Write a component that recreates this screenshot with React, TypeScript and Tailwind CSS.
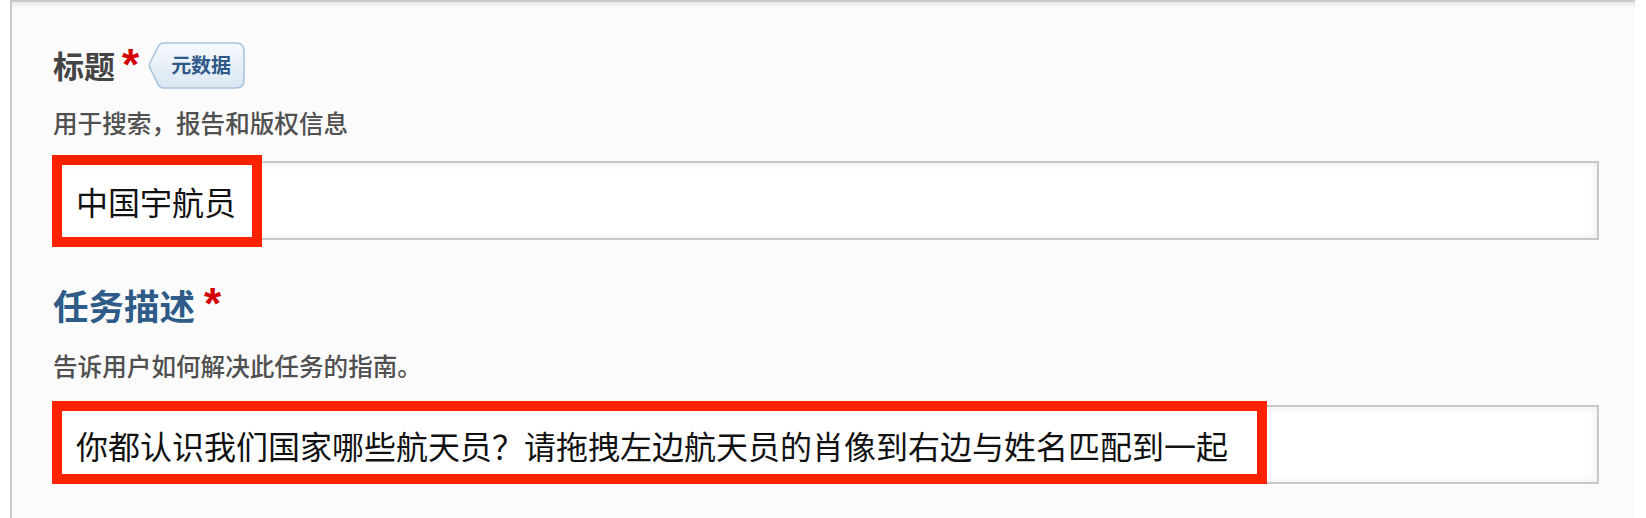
import React from 'react';

const cjk = '"Noto Sans CJK SC", "Noto Sans", sans-serif';

function Star({ top }: { top: string }) {
  return (
    <span
      className={`self-start ${top} text-[44px] leading-none text-[#d40000] font-bold`}
      style={{ fontFamily: '"Liberation Sans", sans-serif' }}
    >
      *
    </span>
  );
}

function MetaBadge() {
  return (
    <div className="relative w-[97px] h-[47px] flex items-center">
      <svg className="absolute inset-0" width="97" height="47" viewBox="0 0 97 47">
        <defs>
          <linearGradient id="badgeBg" x1="0" y1="0" x2="0" y2="1">
            <stop offset="0" stopColor="#f7fafd" />
            <stop offset="1" stopColor="#d9e6f1" />
          </linearGradient>
        </defs>
        <path
          d="M15 1 H88 Q96 1 96 9 V38 Q96 46 88 46 H15 Q13 46 11 44 L2 26 Q0.8 23.5 2 21 L11 3 Q13 1 15 1 Z"
          fill="url(#badgeBg)"
          stroke="#a9c4dc"
          strokeWidth="1.6"
        />
      </svg>
      <span
        className="relative pl-[23px] text-[20px] font-bold text-[#2f5a89] leading-none"
        style={{ fontFamily: cjk }}
      >
        元数据
      </span>
    </div>
  );
}

function Field({ value, boxWidth, boxTop, boxHeight }: { value: string; boxWidth: number; boxTop: string; boxHeight: string }) {
  return (
    <div className="relative w-[1546px] h-[79px]">
      <div
        className="w-full h-full border-2 border-[#c8c8c8] bg-white shadow-[inset_0_0_9px_rgba(0,0,0,0.09)] flex items-center pl-[21px] text-[32px] text-[#111]"
        style={{ fontFamily: cjk }}
      >
        {value}
      </div>
      {/* annotation box drawn over the field */}
      <div
        className={`absolute left-[-1px] ${boxTop} ${boxHeight} border-[10px] border-[#ff2200]`}
        style={{ width: boxWidth }}
      />
    </div>
  );
}

export default function App() {
  return (
    <div className="w-[1646px] h-[518px] bg-white overflow-hidden">
      <div className="ml-[10px] w-[1625px] h-[518px] border-l-2 border-t-2 border-[#cbcbcb] bg-[#fbfbfb] shadow-[inset_0_6px_6px_-5px_rgba(0,0,0,0.12)] pl-[41px] pt-[38px]">
        {/* 标题 */}
        <div className="h-[50px] flex items-center">
          <span className="text-[31px] font-bold text-[#444] mr-[7px]" style={{ fontFamily: cjk }}>
            标题
          </span>
          <Star top="mt-[3px]" />
          <div className="ml-[9px]">
            <MetaBadge />
          </div>
        </div>
        <div className="mt-[20px] h-[24px] flex items-center text-[24.6px] font-medium text-[#505050]" style={{ fontFamily: cjk }}>
          用于搜索，报告和版权信息
        </div>
        <div className="mt-[27px]">
          <Field value="中国宇航员" boxWidth={210} boxTop="top-[-6px]" boxHeight="h-[92px]" />
        </div>

        {/* 任务描述 */}
        <div className="mt-[40px] h-[50px] flex items-center">
          <span className="text-[35.5px] font-bold text-[#2e5b88] mr-[9px]" style={{ fontFamily: cjk }}>
            任务描述
          </span>
          <Star top="mt-[2px]" />
        </div>
        <div className="mt-[23px] h-[24px] flex items-center text-[24.6px] font-medium text-[#505050]" style={{ fontFamily: cjk }}>
          告诉用户如何解决此任务的指南。
        </div>
        <div className="mt-[28px]">
          <Field
            value="你都认识我们国家哪些航天员？请拖拽左边航天员的肖像到右边与姓名匹配到一起"
            boxWidth={1215}
            boxTop="top-[-4px]"
            boxHeight="h-[83px]"
          />
        </div>
      </div>
    </div>
  );
}
